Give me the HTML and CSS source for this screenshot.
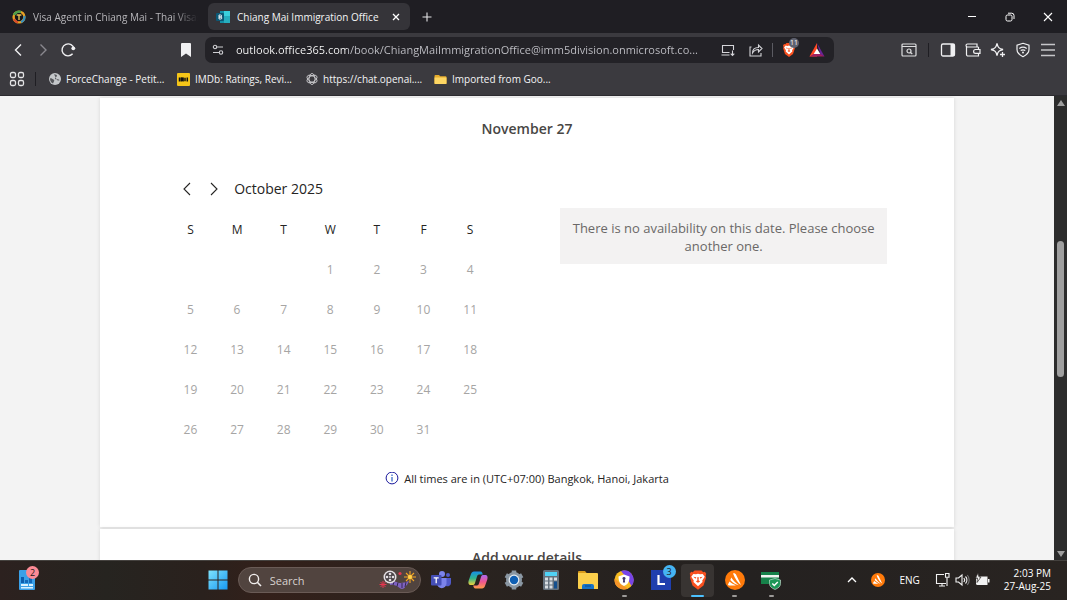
FILE: index.html
```html
<!DOCTYPE html>
<html lang="en">
<head>
  <meta charset="UTF-8" />
  <meta name="viewport" content="width=device-width, initial-scale=1.0" />
  <title>Chiang Mai Immigration Office</title>
  <link rel="stylesheet" href="styles.css">
</head>
<body>
  <!-- Tab strip -->
  <header class="tab-strip">
    <button class="tab">
      <svg class="icon-14" viewBox="0 0 14 14"><circle cx="7" cy="7" r="5.4" fill="#15151a" stroke="#e8a023" stroke-width="2.4"/><path d="M2 5A5.4 5.4 0 0 1 9 2" fill="none" stroke="#4aa04c" stroke-width="2.4"/><path d="M12.3 6A5.4 5.4 0 0 1 9 12" fill="none" stroke="#2f8fc4" stroke-width="2"/><path d="M2 9A5.4 5.4 0 0 0 6 12.4" fill="none" stroke="#d9472b" stroke-width="2"/><path d="M4.6 5h4.8M7 5v5" stroke="#e8c055" stroke-width="1.4"/></svg>
      <span class="tab-title faded">Visa Agent in Chiang Mai - Thai Visas</span>
    </button>
    <div class="tab active">
      <svg class="icon-14" viewBox="0 0 14 14"><path d="M4 1h9v12H4z" fill="#1490a8"/><path d="M8 1h6v5H8z" fill="#39d0dc"/><path d="M8 6h6v7H8z" fill="#26aebf"/><rect y="3" width="8" height="8" rx="1" fill="#0b5876"/><path d="M3 5h1.6a1 1 0 0 1 0 2H3zM3 7h1.8a1 1 0 0 1 0 2H3z" fill="none" stroke="#fff" stroke-width=".9"/></svg>
      <span class="tab-title">Chiang Mai Immigration Office</span>
      <button class="tab-close" aria-label="Close tab">
        <svg class="icon-8" viewBox="0 0 8 8"><path d="M1 1l6 6M7 1L1 7" stroke="#fff" stroke-width="1.3"/></svg>
      </button>
    </div>
    <button class="new-tab" aria-label="New tab">
      <svg class="icon-10" viewBox="0 0 10 10"><path d="M5 .5v9M.5 5h9" stroke="#e6e6e8" stroke-width="1.1"/></svg>
    </button>
    <div class="window-buttons">
      <button aria-label="Minimize"><svg class="icon-10" viewBox="0 0 10 10"><path d="M1 4.500h8" stroke="#fff"/></svg></button>
      <button aria-label="Restore"><svg class="icon-10" viewBox="0 0 10 10"><g fill="none" stroke="#fff"><rect x="1" y="3" width="6" height="6" rx="1.5"/><path d="M3 1.2h3.7a2.3 2.3 0 0 1 2.3 2.3V7"/></g></svg></button>
      <button aria-label="Close"><svg class="icon-10" viewBox="0 0 10 10"><path d="M1 1l8 8M9 1L1 9" stroke="#fff" stroke-width="1.1"/></svg></button>
    </div>
  </header>

  <!-- Navigation bar -->
  <nav class="toolbar">
    <div class="nav-buttons">
      <button aria-label="Back"><svg class="icon-16" viewBox="0 0 16 16"><path d="M11 2.500L5.500 8l5.500 5.500" fill="none" stroke="#f0f0f2" stroke-width="1.400"/></svg></button>
      <button aria-label="Forward"><svg class="icon-16" viewBox="0 0 16 16"><path d="M5.500 2.500L11 8l-5.500 5.500" fill="none" stroke="#8a898f" stroke-width="1.400"/></svg></button>
      <button aria-label="Reload"><svg class="icon-16" viewBox="0 0 16 16"><path d="M12.600 11.800A6 6 0 1 1 14 7" fill="none" stroke="#f0f0f2" stroke-width="1.400"/><circle cx="13.300" cy="6.300" r="1.900" fill="#f0f0f2"/></svg></button>
    </div>
    <button class="bookmark" aria-label="Bookmark this page"><svg class="icon-16" viewBox="0 0 16 16"><path d="M4 1h8a1 1 0 0 1 1 1v13l-5-3.500L3 15V2a1 1 0 0 1 1-1z" fill="#f0f0f2"/></svg></button>
    <div class="address-bar">
      <button aria-label="Site settings"><svg class="icon-12" viewBox="0 0 12 12"><g fill="none" stroke="#cfcfd3" stroke-width="1.100"><circle cx="3" cy="3" r="1.700"/><circle cx="9" cy="8.500" r="1.700"/><path d="M5 3h6M1 8.500h6"/></g></svg></button>
      <input class="url" type="text" aria-label="Address" value="outlook.office365.com/book/ChiangMaiImmigrationOffice@imm5division.onmicrosoft.co...">
      <button aria-label="Install app"><svg class="icon-16" viewBox="0 0 16 16"><g fill="none" stroke="#d5d5d9" stroke-width="1.100"><path d="M9.500 10.500H2.500v-7h11V8M1.500 13h8M12.500 8.500v5M10.700 11.700l1.800 1.800 1.800-1.800"/></g></svg></button>
      <button aria-label="Share"><svg class="icon-16" viewBox="0 0 16 16"><path d="M3.500 5H2v9h11v-3M4.500 11c0-4 2.500-5.500 6-5.500V3l3.500 3.500-3.500 3.500V7.500C8 7.500 6 8.500 4.500 11z" fill="none" stroke="#d5d5d9" stroke-width="1.100"/></svg></button>
      <span class="divider light"></span>
      <button class="shield" aria-label="Brave Shields">
        <svg class="icon-16" viewBox="0 0 16 16"><use href="#brave"/></svg>
        <span class="shield-count">11</span>
      </button>
      <button aria-label="Brave Rewards"><svg class="icon-16" viewBox="0 0 16 16"><path d="M8 1L.5 14.500h7.500z" fill="#ff4724"/><path d="M8 1l7.500 13.500-4-2z" fill="#6a2398"/><path d="M.5 14.500h15l-4-2.500H4.500z" fill="#9e1f63"/><path d="M8 6.500l-3.300 5.500h6.600z" fill="#fff"/></svg></button>
    </div>
    <div class="tool-buttons">
      <button aria-label="Search tabs"><svg class="icon-16" viewBox="0 0 16 16"><g fill="none" stroke="#dededf" stroke-width="1.200"><rect x="1" y="2" width="14" height="12" rx="1"/><path d="M1 4.500h14M9.500 10.500l1.800 1.500"/><circle cx="8" cy="9" r="2"/></g></svg></button>
      <span class="divider dark"></span>
      <button aria-label="Sidebar"><svg class="icon-16" viewBox="0 0 16 16"><rect x="1.500" y="2" width="13" height="12" rx="1.500" fill="none" stroke="#f0f0f2" stroke-width="1.300"/><path d="M10.500 2h4v12h-4z" fill="#f0f0f2"/></svg></button>
      <button aria-label="Wallet"><svg class="icon-16" viewBox="0 0 16 16"><g fill="none" stroke="#f0f0f2" stroke-width="1.200"><path d="M13.500 5H2.500a1 1 0 0 1 0-3H12v3M1.500 4v8.500A1.500 1.500 0 0 0 3 14h10.500V5"/><path d="M15 7.500h-4.500a1.900 1.900 0 0 0 0 3.800H15z" fill="#3b3a3f"/></g></svg></button>
      <button aria-label="Leo AI"><svg class="icon-16" viewBox="0 0 16 16"><path d="M7 1.500C7.800 5.500 9 6.500 13 7.500 9 8.500 7.800 9.500 7 13.500 6.200 9.500 5 8.500 1 7.500 5 6.500 6.200 5.500 7 1.500zM12.500 10v5M10 12.500h5" fill="none" stroke="#f0f0f2" stroke-width="1.300"/></svg></button>
      <button aria-label="VPN"><svg class="icon-16" viewBox="0 0 16 16"><g fill="none" stroke="#f0f0f2" stroke-width="1.200"><path d="M8 1.300l6 2v4.200c0 3.500-2.500 5.500-6 7.200-3.500-1.700-6-3.700-6-7.200V3.300z"/><path d="M4.300 6.500c2.300-1.600 5.100-1.600 7.400 0M5.700 8.600c1.500-1 3.100-1 4.600 0"/></g><circle cx="8" cy="10.600" r="1" fill="#f0f0f2"/></svg></button>
      <button aria-label="Menu"><svg class="icon-16" viewBox="0 0 16 16"><path d="M1 2.500h14M1 8h14M1 13.500h14" stroke="#c6c6c9" stroke-width="1.500"/></svg></button>
    </div>
  </nav>

  <!-- Bookmarks bar -->
  <nav class="bookmarks">
    <button aria-label="All bookmarks"><svg class="icon-16" viewBox="0 0 16 16"><g fill="none" stroke="#e3e3e5" stroke-width="1.300"><rect x="1.500" y="1.500" width="5" height="5" rx="1.500"/><rect x="9.500" y="1.500" width="5" height="5" rx="1.500"/><rect x="1.500" y="9.500" width="5" height="5" rx="1.500"/><rect x="9.500" y="9.500" width="5" height="5" rx="1.500"/></g></svg></button>
    <span class="divider dark"></span>
    <a class="bookmark-link w-petition" href="#"><svg class="icon-12" viewBox="0 0 12 12"><circle cx="6" cy="6" r="6" fill="#c4c7ca"/><path d="M1 5.500c1.500-.5 2 .5 3.500 1S5 8.500 4 10.500C2 9.500 1 8 1 5.500zM5 1.200c2 0 3 .8 3 1.800S6 4 6 5.500s2.500 0 4.500 1.500c-.5 1-1.500.5-2.500 0" fill="#56585c"/></svg>ForceChange - Petit...</a>
    <a class="bookmark-link w-imdb" href="#"><svg class="icon-13" viewBox="0 0 13 13"><rect width="13" height="13" rx="1" fill="#f5c518"/><path d="M2.500 4.500v4M4.300 8.500v-4l.9 2 .9-2v4M8 4.700v3.600M10.300 4.500v4" stroke="#111" stroke-width="1.500" fill="none"/></svg>IMDb: Ratings, Revi...</a>
    <a class="bookmark-link w-chat" href="#"><svg class="icon-12" viewBox="0 0 12 12"><g fill="none" stroke="#dadadd" stroke-width=".8"><ellipse cx="6" cy="6" rx="3" ry="5.500"/><ellipse cx="6" cy="6" rx="3" ry="5.500" transform="rotate(60 6 6)"/><ellipse cx="6" cy="6" rx="3" ry="5.500" transform="rotate(120 6 6)"/></g></svg>https://chat.openai....</a>
    <a class="bookmark-link" href="#"><svg class="icon-13" viewBox="0 0 13 13"><path d="M.5 3a1 1 0 0 1 1-1H5l1.200 1.300h5.300a1 1 0 0 1 1 1V11h-12z" fill="#e6ac2c"/><path d="M.5 4.500h12V10a1 1 0 0 1-1 1h-10a1 1 0 0 1-1-1z" fill="#fdd663"/></svg>Imported from Goo...</a>
  </nav>

  <!-- Booking page -->
  <div class="viewport">
    <main class="page">
      <section class="card booking">
        <h2>November 27</h2>
        <div class="picker">
          <div class="calendar">
            <div class="month">
              <button aria-label="Previous month"><svg class="icon-14" viewBox="0 0 14 14"><path d="M10 1L4 7l6 6" fill="none" stroke="#252423" stroke-width="1.100"/></svg></button>
              <button aria-label="Next month"><svg class="icon-14" viewBox="0 0 14 14"><path d="M4 1l6 6-6 6" fill="none" stroke="#252423" stroke-width="1.100"/></svg></button>
              <span>October 2025</span>
            </div>
            <table>
              <thead>
                <tr><th>S</th><th>M</th><th>T</th><th>W</th><th>T</th><th>F</th><th>S</th></tr>
              </thead>
              <tbody>
                <tr><td></td><td></td><td></td><td>1</td><td>2</td><td>3</td><td>4</td></tr>
                <tr><td>5</td><td>6</td><td>7</td><td>8</td><td>9</td><td>10</td><td>11</td></tr>
                <tr><td>12</td><td>13</td><td>14</td><td>15</td><td>16</td><td>17</td><td>18</td></tr>
                <tr><td>19</td><td>20</td><td>21</td><td>22</td><td>23</td><td>24</td><td>25</td></tr>
                <tr><td>26</td><td>27</td><td>28</td><td>29</td><td>30</td><td>31</td><td></td></tr>
              </tbody>
            </table>
          </div>
          <p class="notice">There is no availability on this date. Please choose another one.</p>
        </div>
        <p class="timezone">
          <svg class="icon-14" viewBox="0 0 14 14"><circle cx="7" cy="6" r="5.900" fill="none" stroke="#1b1a9c" stroke-width="1"/><path d="M7 5v4.500M7 2.600v1.300" stroke="#2b62c4" stroke-width="1.200"/></svg>
          All times are in (UTC+07:00) Bangkok, Hanoi, Jakarta
        </p>
      </section>
      <section class="card details">
        <h2>Add your details</h2>
      </section>
    </main>
    <div class="scrollbar">
      <svg class="icon-8" viewBox="0 0 8 8"><path d="M4 1l4 6H0z" fill="#9f9f9f"/></svg>
      <div class="track"><div class="thumb"></div></div>
      <svg class="icon-8" viewBox="0 0 8 8"><path d="M4 7l4-6H0z" fill="#9f9f9f"/></svg>
    </div>
  </div>

  <!-- Taskbar -->
  <footer class="taskbar">
    <div class="widgets">
      <button class="badged" aria-label="Widgets">
        <svg class="icon-20" viewBox="0 0 20 20"><rect x="2" width="16" height="20" rx="1" fill="#3aa0e8"/><path d="M4 7h3v6H4z" fill="#0b5cad"/><path d="M8 10h3v3H8zM12 7h3v6h-3z" fill="#1267b8"/><path d="M4 14h7v2H4zM12 14h4v2h-4zM4 17h12v1.500H4z" fill="#d9f1ff"/></svg>
        <span class="badge pink">2</span>
      </button>
    </div>
    <div class="apps">
      <button aria-label="Start"><svg class="icon-20" viewBox="0 0 20 20"><defs><linearGradient id="win" x1="0" y1="0" x2="1" y2="1"><stop offset="0" stop-color="#7fe3fd"/><stop offset="1" stop-color="#1698f2"/></linearGradient></defs><path d="M.5.5h9v9h-9zM10.500.5h9v9h-9zM.5 10.500h9v9h-9zM10.500 10.500h9v9h-9z" fill="url(#win)"/></svg></button>
      <label class="search">
        <svg class="icon-14" viewBox="0 0 14 14"><circle cx="6" cy="6" r="4.600" fill="none" stroke="#f2efee" stroke-width="1.400"/><path d="M9.300 9.300L13 13" stroke="#f2efee" stroke-width="1.600"/></svg>
        <input type="text" placeholder="Search" aria-label="Search">
        <svg class="highlight" viewBox="0 0 40 20"><path d="M12 12c4-2 7 1 10 1s6-1 9-2l-2 4c-2 1-2 4-5 4s-5-5-12-4z" fill="#7f62c0"/><path d="M16 12l-1 3M20 12.500l-1 4M24 13l0 5M28 12l-1 5" stroke="#332653" stroke-width="1"/><circle cx="12" cy="7" r="6.500" fill="#e4dfe2"/><circle cx="12" cy="7" r="5" fill="#4a4346"/><g fill="#e4dfe2"><circle cx="12" cy="4" r="1.300"/><circle cx="12" cy="10" r="1.300"/><circle cx="9" cy="7" r="1.300"/><circle cx="15" cy="7" r="1.300"/><circle cx="12" cy="7" r=".9"/></g><path d="M32 1v12M26 7h12M28 3l8 8M36 3l-8 8" stroke="#f5a623" stroke-width="1.100"/><circle cx="32" cy="7" r="2" fill="#ffd34d"/><path d="M5 11v7M1.500 14.500h7M2.500 12l5 5M7.500 12l-5 5" stroke="#e5364f" stroke-width="1"/><circle cx="22" cy="3.500" r="1.600" fill="#e5364f"/></svg>
      </label>
      <button aria-label="Teams"><svg class="icon-20" viewBox="0 0 20 20"><circle cx="11" cy="4" r="3" fill="#7b83eb"/><circle cx="17" cy="5" r="2" fill="#5059c9"/><path d="M13 8h7v5a3.500 3.500 0 0 1-5 3z" fill="#5059c9"/><path d="M6 8h9.500v5.500a4.750 4.750 0 0 1-9.500 0z" fill="#7b83eb"/><rect y="5" width="10.500" height="10.500" rx="1" fill="#454fb8"/><path d="M2.700 7.800h5M5.200 7.800v5.500" stroke="#fff" stroke-width="1.300"/></svg></button>
      <button aria-label="Copilot"><svg class="icon-20" viewBox="0 0 20 20"><defs><linearGradient id="cpa" x1="0" y1="0" x2="0" y2="1"><stop offset="0" stop-color="#168fe8"/><stop offset=".5" stop-color="#2fb58e"/><stop offset="1" stop-color="#f0d03a"/></linearGradient><linearGradient id="cpb" x1="0" y1="0" x2="0" y2="1"><stop offset="0" stop-color="#a86af0"/><stop offset=".5" stop-color="#ee5590"/><stop offset="1" stop-color="#ff9c4a"/></linearGradient></defs><path d="M6 1.500h6.500c1.500 0 2 1.500 2.300 3H11c-1 0-1.600.7-2 2l-2 6.500c-.4 1.500-1.200 2-2.500 2H3c-2.500 0-3-2-2.300-4.500L3 4c.5-1.600 1.500-2.500 3-2.500z" fill="url(#cpa)"/><path d="M14 18.500H7.500c-1.500 0-2-1.500-2.300-3H9c1 0 1.600-.7 2-2L13 7c.4-1.500 1.200-2 2.500-2H17c2.500 0 3 2 2.300 4.500L17 16c-.5 1.600-1.500 2.500-3 2.500z" fill="url(#cpb)"/></svg></button>
      <button aria-label="Settings"><svg class="icon-20" viewBox="0 0 20 20"><circle cx="10" cy="10" r="8" fill="#8a97a3"/><path d="M10 .5v19M1.800 5.200l16.400 9.600M1.800 14.800l16.400-9.600" stroke="#8a97a3" stroke-width="4.500"/><circle cx="10" cy="10" r="5.400" fill="#e8eef3"/><circle cx="10" cy="10" r="4.200" fill="#0f5fb3"/></svg></button>
      <button aria-label="Calculator"><svg class="icon-20" viewBox="0 0 20 20"><rect x="2" width="16" height="20" rx="1.500" fill="#64717d"/><rect x="4" y="2" width="12" height="4" fill="#50d3f7"/><path d="M4 7.500h3v3H4zM8.500 7.500h3v3h-3zM13 7.500h3v3h-3zM4 11.500h3v3H4zM8.500 11.500h3v3h-3zM4 15.500h3v3H4zM8.500 15.500h3v3h-3z" fill="#d8dee3"/><path d="M13 11.500h3v7h-3z" fill="#14508f"/></svg></button>
      <button aria-label="File Explorer"><svg class="icon-22" viewBox="0 0 22 22"><path d="M1 3a1 1 0 0 1 1-1h6l2 2.500H1z" fill="#d99b1b"/><path d="M1 4h19a1 1 0 0 1 1 1v15H2a1 1 0 0 1-1-1z" fill="#fbcf4b"/><path d="M5 20v-3a2 2 0 0 1 2-2h8a2 2 0 0 1 2 2v3z" fill="#1673c7"/><path d="M8 17h6" stroke="#0c4d8f"/></svg></button>
      <button class="running" aria-label="Avast Secure Browser"><svg class="icon-20" viewBox="0 0 20 20"><circle cx="10" cy="10" r="9.500" fill="#f6bb22"/><path d="M7 1A9.500 9.500 0 0 1 17.500 16L14 10z" fill="#7844e6"/><path d="M.6 8.500A9.500 9.500 0 0 0 14 18.600L8 15z" fill="#f5942a"/><path d="M10 4.500l5.500 2c0 5-1.500 8-5.500 9.500-4-1.500-5.500-4.500-5.500-9.500z" fill="#fff"/><path d="M10 7a1.500 1.500 0 0 1 .8 2.800l.3 2.700h-2.200l.3-2.700A1.500 1.500 0 0 1 10 7z" fill="#40366b"/></svg></button>
      <button class="badged" aria-label="Notes">
        <svg class="icon-20" viewBox="0 0 20 20"><rect width="20" height="20" fill="#1f3fae"/><path d="M7.500 5v9H14" fill="none" stroke="#fff" stroke-width="2.200"/></svg>
        <span class="badge blue">3</span>
      </button>
      <button class="current" aria-label="Brave">
        <svg class="icon-22" viewBox="0 0 16 16"><g id="brave"><path d="M5.500 1h5l1.300 1.300L13 2l1 1.500-.5 1.500.4 1.200L12 12l-4 3-4-3L2.100 6.200 2.500 5 2 3.500 3 2l1.200.3z" fill="#f9501f"/><path d="M4.600 3.600l1.900.3L8 3.500l1.500.4 1.900-.3 1.500 2-1.800 2.700.2 1.200L8 12.600 4.700 9.500l.2-1.200-1.800-2.700z" fill="#fff"/><path d="M4.600 5.600l2.200.4-.6 1.100zM11.400 5.600l-2.200.4.600 1.100zM7.400 6h1.200L8.400 8.200l1.100.8L8 10l-1.500-1 1.100-.8z" fill="#f9501f"/></g></svg>
      </button>
      <button class="running" aria-label="Avast Antivirus"><svg class="icon-20" viewBox="0 0 20 20"><g id="avast"><circle cx="10" cy="10" r="10" fill="#ff7a0a"/><path d="M8 3.500c1.500-.8 2.400 0 3 1l5 10.500c-3-2-6-6-8-11.500zM6.300 7.500c2 3 4.500 5.500 7.500 7.700-3-.7-6-2.400-8.500-5.200zM4.500 11.500c2 1.800 4 2.900 6.500 3.700-1.500.3-4.500.3-7 .3-1 0-1.200-.8-.8-1.500z" fill="#fff"/></g></svg></button>
      <button class="running" aria-label="Money"><svg class="icon-20" viewBox="0 0 20 20"><path d="M0 2h18v12H0z" fill="#16824a"/><path d="M0 5h18v2.500H0z" fill="#f0f5f1"/><path d="M14 8.500l5.500 1.500v3.500c0 3-2 4.500-5.500 6-3.500-1.500-5.500-3-5.500-6V10z" fill="#1d9657" stroke="#d9efe2" stroke-width=".6"/><path d="M11.300 13.500l2 2 3.500-3.500" fill="none" stroke="#fff" stroke-width="1.500"/></svg></button>
    </div>
    <div class="tray">
      <button aria-label="Show hidden icons"><svg class="icon-10" viewBox="0 0 10 10"><path d="M1 7l4-4 4 4" fill="none" stroke="#fff" stroke-width="1.300"/></svg></button>
      <button aria-label="Avast"><svg class="icon-14" viewBox="0 0 20 20"><use href="#avast"/></svg></button>
      <button class="lang">ENG</button>
      <button class="status" aria-label="Network, sound, battery">
        <svg class="icon-16" viewBox="0 0 16 16"><g fill="none" stroke="#f2f2f2" stroke-width="1.100"><path d="M10 2.500H2.500v9H12M5 14h6M8 11.500V14M13 5.500v8.500"/><path d="M11.500 1.500h3.500v3.800h-3.500z"/></g></svg>
        <svg class="icon-16" viewBox="0 0 16 16"><g fill="none" stroke="#f2f2f2" stroke-width="1.100"><path d="M2 6v4h2.500L8 13V3L4.500 6z"/><path d="M9.800 6a3 3 0 0 1 0 4M11.500 4.500a5 5 0 0 1 0 7"/><path d="M13.300 3a7.500 7.500 0 0 1 0 10" stroke="#777"/></g></svg>
        <svg class="icon-16" viewBox="0 0 16 16"><path d="M4 4.500h9.500V13H3.500A1.500 1.500 0 0 1 2 11.500V7zM14 7h1.500v3.500H14z" fill="#f2f2f2"/><path d="M4 1L1.500 6h2L3 10.500 7 5H5z" fill="#f2f2f2" stroke="#272320" stroke-width=".7"/></svg>
      </button>
      <div class="clock"><span>2:03 PM</span><span>27-Aug-25</span></div>
    </div>
  </footer>
</body>
</html>
```
FILE: styles.css
```css
* {
  margin: 0;
  padding: 0;
  box-sizing: border-box;
}
body {
  display: flex;
  flex-direction: column;
  height: 100vh;
  overflow: hidden;
  font-family: "Open Sans", "Noto Sans", sans-serif;
  font-size: 10px;
  color: #252423;
  background-color: #f3f3f3;
}
button,
input {
  font: inherit;
  color: inherit;
  background: none;
  border: none;
  outline: none;
}
button {
  display: flex;
  align-items: center;
  justify-content: center;
}
svg {
  display: block;
  flex-shrink: 0;
}
/* Icon sizes */
.icon-8 { width: 8px; height: 8px; }
.icon-10 { width: 10px; height: 10px; }
.icon-12 { width: 12px; height: 12px; }
.icon-13 { width: 13px; height: 13px; }
.icon-14 { width: 14px; height: 14px; }
.icon-16 { width: 16px; height: 16px; }
.icon-20 { width: 20px; height: 20px; }
.icon-22 { width: 22px; height: 22px; }

.divider {
  width: 1px;
  height: 14px;
}
.divider.light { background-color: #5b5b62; }
.divider.dark { background-color: #1f1e23; }

/* Tab strip */
.tab-strip {
  display: flex;
  align-items: center;
  flex-shrink: 0;
  height: 33px;
  padding-left: 4px;
  background-color: #1f1e23;
  color: #f4f4f5;
}
.tab {
  display: flex;
  align-items: center;
  justify-content: flex-start;
  gap: 7px;
  width: 202px;
  height: 27px;
  padding: 0 8px;
  border-radius: 6px;
}
.tab.active {
  margin-left: 2px;
  background-color: #353439;
}
.tab-title {
  flex: 1;
  text-align: left;
  white-space: nowrap;
  overflow: hidden;
}
.tab-title.faded {
  color: #b6b5b9;
  -webkit-mask-image: linear-gradient(to right, #000 85%, transparent);
  mask-image: linear-gradient(to right, #000 85%, transparent);
}
.tab-close {
  width: 12px;
  height: 16px;
}
.new-tab {
  width: 33px;
  height: 27px;
}
.window-buttons {
  display: flex;
  margin-left: auto;
}
.window-buttons button {
  width: 38px;
  height: 33px;
}

/* Toolbar */
.toolbar {
  display: flex;
  align-items: center;
  flex-shrink: 0;
  height: 33px;
  padding: 0 11px 0 10px;
  background-color: #3b3a3f;
}
.nav-buttons {
  display: flex;
  gap: 9px;
}
.bookmark {
  margin-left: 102px;
}
.address-bar {
  display: flex;
  align-items: center;
  gap: 12px;
  flex: 1;
  height: 26px;
  margin: 0 67px 0 11px;
  padding: 0 9px 0 7px;
  border-radius: 7px;
  background-color: #232227;
}
.url {
  flex: 1;
  min-width: 0;
  font-size: 11px;
  background-image: linear-gradient(to right, #fff 111px, #c3c3c9 111px);
  -webkit-background-clip: text;
  background-clip: text;
  color: transparent;
}
.address-bar .divider {
  margin: 0 -4px;
}
.shield {
  position: relative;
}
.shield-count {
  position: absolute;
  top: -4px;
  left: 8px;
  width: 10px;
  border-radius: 5px;
  background-color: #5f6270;
  color: #fff;
  font-size: 7px;
  line-height: 10px;
  text-align: center;
}
.tool-buttons {
  display: flex;
  align-items: center;
  gap: 9px;
}
.tool-buttons .divider {
  margin: 0 2px;
}

/* Bookmarks bar */
.bookmarks {
  display: flex;
  align-items: center;
  flex-shrink: 0;
  height: 30px;
  padding: 0 9px 3px;
  border-bottom: 1px solid #2c2b30;
  background-color: #3b3a3f;
  color: #f4f4f5;
}
.bookmarks .divider {
  margin: 0 13px 0 10px;
}
.bookmark-link {
  display: flex;
  align-items: center;
  gap: 5px;
  color: inherit;
  text-decoration: none;
  white-space: nowrap;
}
.w-petition { width: 128px; }
.w-imdb { width: 129px; }
.w-chat { width: 128px; }

/* Web page */
.viewport {
  display: flex;
  flex: 1;
  min-height: 0;
}
.page {
  flex: 1;
  padding-top: 2px;
  overflow: hidden;
}
.card {
  width: 81%;
  margin: 0 auto 2px;
  background-color: #fff;
  box-shadow: 0 0 4px rgba(0, 0, 0, 0.12);
}
.card h2 {
  font-size: 14px;
  line-height: 20px;
  font-weight: 600;
  text-align: center;
  color: #484644;
}
.booking {
  padding: 21px 67px 39px;
}
.details {
  padding: 19px 67px;
}
.picker {
  display: grid;
  grid-template-columns: 1fr 1fr;
  gap: 67px;
  align-items: start;
  margin-top: 29px;
}
.month {
  display: flex;
  align-items: center;
  height: 41px;
  padding-left: 13px;
  font-size: 14px;
}
.month button {
  width: 14px;
  margin-right: 13px;
}
table {
  width: 100%;
  table-layout: fixed;
  border-collapse: collapse;
}
th,
td {
  height: 40px;
  font-size: 12px;
  font-weight: 400;
  text-align: center;
  vertical-align: middle;
}
td {
  color: #a6a5a4;
}
.notice {
  margin-top: 40px;
  padding: 11px 10px 9px;
  background-color: #f3f2f2;
  color: #6a6867;
  font-size: 13px;
  line-height: 18px;
  text-align: center;
}
.timezone {
  display: flex;
  align-items: center;
  justify-content: center;
  gap: 5px;
  margin-top: 21px;
  font-size: 11px;
  line-height: 18px;
}
.scrollbar {
  display: flex;
  flex-direction: column;
  align-items: center;
  width: 13px;
  padding: 3px 0 2px;
  background-color: #2c2c2c;
}
.track {
  flex: 1;
  width: 7px;
  padding-top: 134px;
}
.thumb {
  height: 31%;
  min-height: 136px;
  border-radius: 4px;
  background-color: #9f9f9f;
}

/* Taskbar */
.taskbar {
  display: flex;
  align-items: center;
  flex-shrink: 0;
  height: 40px;
  box-shadow: inset 0 1px #45423f;
  background: linear-gradient(to right, #2c211f, #262420 10%, #2a211d 19%, #33201a 25%, #2a231f 42%, #242120 70%, #292421);
  color: #fff;
}
.widgets {
  width: 201px;
  padding-left: 17px;
}
.badged {
  position: relative;
}
.badge {
  position: absolute;
  top: -4px;
  left: 9px;
  width: 13px;
  border-radius: 7px;
  color: #1d1a1a;
  font-size: 9px;
  line-height: 13px;
  text-align: center;
}
.badge.pink { background-color: #fb8a95; }
.badge.blue { background-color: #45b4f3; }
.apps {
  display: flex;
  align-items: center;
  justify-content: space-between;
  width: 55%;
}
.apps button {
  position: relative;
  width: 33px;
  height: 33px;
}
.apps .badge {
  top: 1px;
  left: 18px;
}
.search {
  display: flex;
  align-items: center;
  gap: 8px;
  width: 183px;
  height: 26px;
  padding: 0 2px 0 9px;
  border: 1px solid #6a5b56;
  border-radius: 13px;
  background-color: #51443f;
}
.search input {
  flex: 1;
  min-width: 0;
  font-size: 11px;
}
.search input::placeholder {
  color: #d8d2cf;
}
.highlight {
  width: 40px;
  height: 20px;
}
.current {
  border-radius: 4px;
  background-color: #383432;
}
.running::after,
.current::after {
  content: "";
  position: absolute;
  bottom: 0;
  width: 5px;
  height: 2px;
  border-radius: 1px;
  background-color: #9c9a98;
}
.current::after {
  width: 13px;
  background-color: #4cc2ff;
}
.tray {
  display: flex;
  align-items: center;
  gap: 14px;
  margin-left: auto;
  padding-right: 16px;
}
.status {
  gap: 4px;
}
.clock {
  display: flex;
  flex-direction: column;
  text-align: right;
  line-height: 13px;
}
```
